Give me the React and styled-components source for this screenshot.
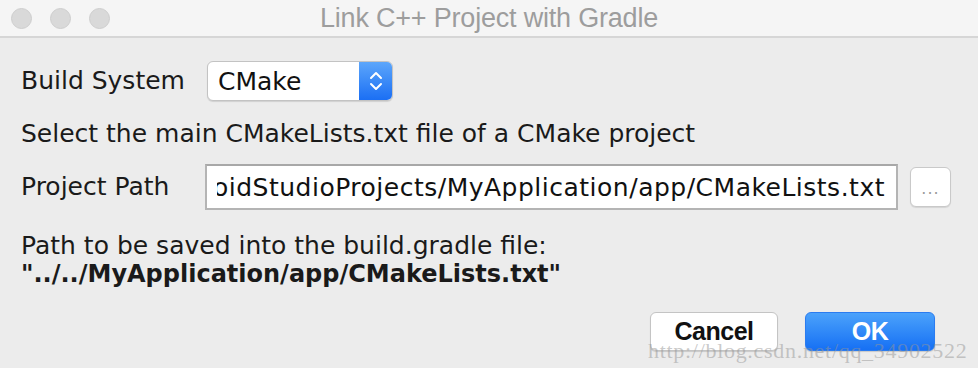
import React from "react";
import styled, { createGlobalStyle } from "styled-components";

const Global = createGlobalStyle`
  html, body { margin: 0; padding: 0; background: #ececec; }
  #root { width: 978px; height: 368px; }
`;

const Window = styled.div`
  position: relative;
  width: 978px;
  height: 368px;
  background: #ececec;
  display: flex;
  flex-direction: column;
  overflow: hidden;
  font-family: "DejaVu Sans", "Noto Sans", sans-serif;
  color: #1a1a1a;
`;

const TitleBar = styled.div`
  height: 36px;
  flex: none;
  display: grid;
  grid-template-columns: 1fr auto 1fr;
  align-items: center;
  background: #f5f5f5;
  border-bottom: 2px solid #d6d6d6;
`;

const Lights = styled.div`
  display: flex;
  gap: 18px;
  padding-left: 11px;
`;

const Light = styled.span`
  width: 21px;
  height: 21px;
  border-radius: 50%;
  background: #d9d9d9;
  border: 1px solid #cecece;
  box-sizing: border-box;
`;

const Title = styled.div`
  font-family: "Liberation Sans", Arial, sans-serif;
  font-size: 27px;
  color: #9d9d9d;
  letter-spacing: -0.2px;
`;

const Content = styled.div`
  padding: 23px 0 0 21px;
  display: flex;
  flex-direction: column;
`;

const FormRow = styled.div`
  display: flex;
  align-items: center;
  margin-top: ${(p) => p.$top || 0}px;
`;

const Label = styled.div`
  width: ${(p) => p.$w}px;
  flex: none;
  font-size: 25px;
  white-space: nowrap;
  line-height: 28px;
`;

const Select = styled.div`
  width: 186px;
  height: 40px;
  box-sizing: border-box;
  display: flex;
  background: #fff;
  border: 1px solid #c3c3c3;
  border-radius: 6px;
  box-shadow: 0 1px 1px rgba(0, 0, 0, 0.12);
  overflow: hidden;
`;

const SelectValue = styled.div`
  flex: 1;
  display: flex;
  align-items: center;
  padding-left: 10px;
  font-size: 25px;
  color: #111;
`;

const SelectArrows = styled.div`
  width: 33px;
  display: flex;
  align-items: center;
  justify-content: center;
  background: linear-gradient(#5ca6fb, #1b6ff4);
`;

const Text = styled.div`
  font-size: ${(p) => (p.$bold ? 24 : 25)}px;
  line-height: ${(p) => p.$lh || 26}px;
  font-weight: ${(p) => (p.$bold ? 700 : 400)};
  margin-top: ${(p) => p.$top || 0}px;
  white-space: nowrap;
`;

const PathInput = styled.div`
  width: 693px;
  height: 46px;
  flex: none;
  box-sizing: border-box;
  background: #fff;
  border: 2px solid #b4b4b4;
  border-top-color: #a8a8a8;
  display: flex;
  align-items: center;
  padding: 0 11px 0 10px;
`;

const PathClip = styled.div`
  flex: 1;
  min-width: 0;
  overflow: hidden;
  display: flex;
  justify-content: flex-end;
  font-size: 25px;
  letter-spacing: 0.5px;
  color: #111;
  white-space: nowrap;
`;

const DotsButton = styled.div`
  width: 41px;
  height: 40px;
  flex: none;
  box-sizing: border-box;
  margin-left: 12px;
  background: #fff;
  border: 1px solid #c9c9c9;
  border-radius: 6px;
  box-shadow: 0 1px 1px rgba(0, 0, 0, 0.1);
  display: flex;
  align-items: flex-end;
  justify-content: center;
  padding-bottom: 8px;
  font-size: 16px;
  color: #9a9a9a;
  letter-spacing: 1px;
`;

const Buttons = styled.div`
  display: flex;
  justify-content: flex-end;
  gap: 27px;
  padding-right: 43px;
  margin-top: 24px;
`;

const Button = styled.div`
  width: ${(p) => p.$w}px;
  height: 39px;
  box-sizing: border-box;
  border-radius: 6px;
  display: flex;
  align-items: center;
  justify-content: center;
  font-family: "Liberation Sans", Arial, sans-serif;
  font-weight: 700;
  font-size: 25px;
  letter-spacing: -0.5px;
  color: ${(p) => (p.$primary ? "#fff" : "#111")};
  background: ${(p) =>
    p.$primary ? "linear-gradient(#4ba2fb, #1670f4)" : "#fff"};
  border: 1px solid ${(p) => (p.$primary ? "#2b7cf0" : "#c4c4c4")};
  box-shadow: 0 1px 1px rgba(0, 0, 0, 0.15);
`;

const Watermark = styled.div`
  position: absolute;
  left: 648px;
  top: 338px;
  font-family: "Liberation Serif", "DejaVu Serif", serif;
  font-size: 22px;
  color: rgba(150, 150, 150, 0.5);
  white-space: nowrap;
  letter-spacing: 0.7px;
  pointer-events: none;
`;

export default function App() {
  return (
    <>
      <Global />
      <Window>
        <TitleBar>
          <Lights>
            <Light />
            <Light />
            <Light />
          </Lights>
          <Title>Link C++ Project with Gradle</Title>
          <div />
        </TitleBar>
        <Content>
          <FormRow>
            <Label $w={186}>Build System</Label>
            <Select>
              <SelectValue>CMake</SelectValue>
              <SelectArrows>
                <svg width="14" height="24" viewBox="0 0 14 24">
                  <path
                    d="M2 9 L7 4 L12 9"
                    fill="none"
                    stroke="#fff"
                    strokeWidth="2"
                    strokeLinecap="round"
                    strokeLinejoin="round"
                  />
                  <path
                    d="M2 15 L7 20 L12 15"
                    fill="none"
                    stroke="#fff"
                    strokeWidth="2"
                    strokeLinecap="round"
                    strokeLinejoin="round"
                  />
                </svg>
              </SelectArrows>
            </Select>
          </FormRow>
          <Text $top={20}>Select the main CMakeLists.txt file of a CMake project</Text>
          <FormRow $top={17}>
            <Label $w={184}>Project Path</Label>
            <PathInput>
              <PathClip>
                <span>oidStudioProjects/MyApplication/app/CMakeLists.txt</span>
              </PathClip>
            </PathInput>
            <DotsButton>...</DotsButton>
          </FormRow>
          <Text $top={22} $lh={28}>Path to be saved into the build.gradle file:</Text>
          <Text $bold $lh={28}>"../../MyApplication/app/CMakeLists.txt"</Text>
          <Buttons>
            <Button $w={128}>Cancel</Button>
            <Button $w={130} $primary>OK</Button>
          </Buttons>
        </Content>
        <Watermark>http://blog.csdn.net/qq_34902522</Watermark>
      </Window>
    </>
  );
}
